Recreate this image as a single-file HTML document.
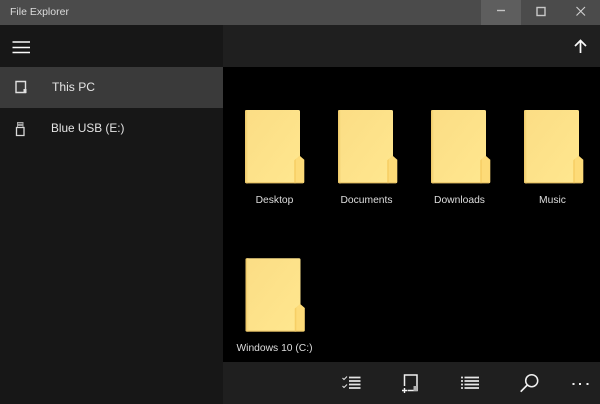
<!DOCTYPE html>
<html>
<head>
<meta charset="utf-8">
<style>
html,body{margin:0;padding:0;background:#000}
#r{position:relative;width:600px;height:404px;overflow:hidden;background:#000;font-family:"Liberation Sans",sans-serif;color:#e8e8e8}
.a{position:absolute}
.t{position:absolute;white-space:nowrap;font-size:11px;line-height:14px}
.l{position:absolute;width:93px;text-align:center;white-space:nowrap;font-size:10.3px;line-height:14px;color:#dedede}
svg{position:absolute;left:0;top:0}
</style>
</head>
<body>
<div id="r">
<div class="a" style="left:0;top:0;width:600px;height:25px;background:#4b4b4b"></div>
<div class="a" style="left:481px;top:0;width:40px;height:25px;background:#5e5e5e"></div>
<div class="t" style="left:10px;top:5px;font-size:10.5px;color:#dcdcdc">File Explorer</div>
<div class="a" style="left:0;top:25px;width:223px;height:379px;background:#171717"></div>
<div class="a" style="left:223px;top:25px;width:377px;height:42px;background:#1f1f1f"></div>
<div class="a" style="left:223px;top:362px;width:377px;height:42px;background:#1f1f1f"></div>
<div class="a" style="left:0;top:67px;width:223px;height:41px;background:#3a3a3a"></div>
<div class="t" style="left:52px;top:80px;font-size:12.1px;color:#e4e4e4">This PC</div>
<div class="t" style="left:51px;top:121px;font-size:11.8px;color:#e4e4e4">Blue USB (E:)</div>
<div class="l" style="left:228px;top:194px">Desktop</div>
<div class="l" style="left:320px;top:194px">Documents</div>
<div class="l" style="left:413px;top:194px">Downloads</div>
<div class="l" style="left:506px;top:194px">Music</div>
<div class="l" style="left:228px;top:342px">Windows 10 (C:)</div>
<svg width="600" height="404" viewBox="0 0 600 404" fill="none">
<defs>
<linearGradient id="g" x1="0" y1="0" x2="1" y2="1">
<stop offset="0" stop-color="#fbdd85"/>
<stop offset="1" stop-color="#ffe78f"/>
</linearGradient>
<g id="f">
<path d="M1.500 0H53.500Q55 0 55 1.500V46L49.500 50.500V73.300H1.500Q0 73.300 0 71.800V1.500Q0 0 1.500 0Z" fill="url(#g)"/>
<path d="M0 1.500Q0 0 1.500 0V73.300Q0 73.300 0 71.800Z" fill="#f0cb6c"/>
<path d="M1.500 0H3V73.300H1.500Z" fill="#f9dc82"/>
<path d="M49.300 73.300V50.300L54.700 45.700L59.300 49.700V71.800Q59.300 73.300 57.800 73.300Z" fill="#fddb78"/>
<path d="M49.300 73.300V50.300L50.800 49V73.300Z" fill="#f6cf66"/>
<path d="M1 72.800H58" stroke="#e8c164" stroke-width="1"/>
</g>
</defs>
<use href="#f" x="245" y="110"/>
<use href="#f" x="338" y="110"/>
<use href="#f" x="431" y="110"/>
<use href="#f" x="524" y="110"/>
<use href="#f" x="245.500" y="258.300"/>
<!-- window buttons -->
<path d="M497 10.500H505" stroke="#c4c4c4" stroke-width="1.400"/>
<rect x="537" y="7.500" width="8" height="8" stroke="#c8c8c8" stroke-width="1.400"/>
<path d="M576.500 7L585 15.500M585 7L576.500 15.500" stroke="#d0d0d0" stroke-width="1.100"/>
<!-- hamburger -->
<path d="M12.500 42H30M12.500 47.500H30M12.500 52.500H30" stroke="#fafafa" stroke-width="1.600"/>
<!-- this pc -->
<path d="M16 81.500H25.500V92.500H16Z" stroke="#e0e0e0" stroke-width="1.400"/>
<rect x="23.500" y="89" width="3" height="4" fill="#e0e0e0"/>
<!-- usb -->
<path d="M16.500 127.500H24V135.500H16.500Z" stroke="#d8d8d8" stroke-width="1.300"/>
<path d="M17.500 127V122.500H23V127" stroke="#a8a8a8" stroke-width="1"/>
<rect x="18" y="123.500" width="4.500" height="2.500" fill="#9a9a9a"/>
<!-- up arrow -->
<path d="M580.500 53V40.500M575 46L580.500 40.500L586 46" stroke="#fafafa" stroke-width="1.700"/>
<!-- checklist -->
<path d="M342.500 378L344 379.500L347 376.500M342.500 386L344 387.500L347 384.500" stroke="#e0e0e0" stroke-width="1.100"/>
<path d="M349 377.500H360.500M349 381H360.500M349 384.500H360.500M349 388H360.500" stroke="#e4e4e4" stroke-width="1.700"/>
<!-- new -->
<path d="M404.500 386V375H417V390.500H408" stroke="#f0f0f0" stroke-width="1.500"/>
<rect x="413.500" y="386" width="3.500" height="5" fill="#b0b0b0"/>
<path d="M402 390.500H407.500M404.500 388V393" stroke="#f4f4f4" stroke-width="1.400"/>
<!-- list -->
<path d="M461 377.500H463M461 381H463M461 384.500H463M461 388H463" stroke="#dcdcdc" stroke-width="1.700"/>
<path d="M464.500 377.500H479M464.500 381H479M464.500 384.500H479M464.500 388H479" stroke="#e8e8e8" stroke-width="1.700"/>
<!-- search -->
<circle cx="531.700" cy="380.700" r="6" stroke="#f0f0f0" stroke-width="1.500"/>
<path d="M527.300 385L520.700 391.700" stroke="#f0f0f0" stroke-width="1.700"/>
<!-- more -->
<rect x="572.500" y="383" width="2" height="2" fill="#f0f0f0"/>
<rect x="579" y="383" width="2" height="2" fill="#f0f0f0"/>
<rect x="586.500" y="383" width="2" height="2" fill="#f0f0f0"/>
</svg>
</div>
</body>
</html>
